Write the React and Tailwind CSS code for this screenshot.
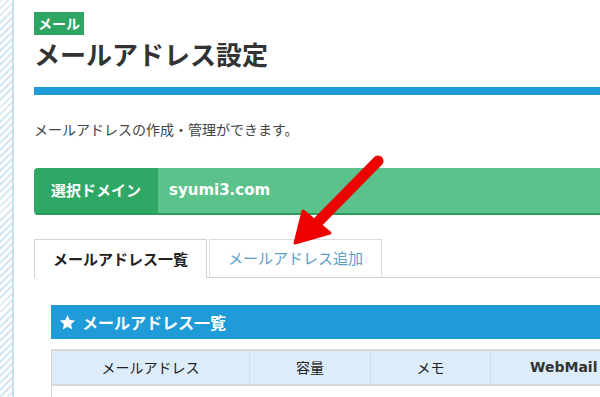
export default function App() {
  const font = { fontFamily: '"Meiryo", "Noto Sans CJK JP", "Noto Sans", sans-serif' };
  const latin = { fontFamily: '"DejaVu Sans", "Noto Sans CJK JP", sans-serif' };
  return (
    <div className="relative flex w-[600px] h-[397px] overflow-hidden bg-white" style={font}>
      <div className="w-[12px] shrink-0 bg-[repeating-linear-gradient(135deg,#d3e8f3_0px,#d3e8f3_2px,#ffffff_2px,#ffffff_5px)]" />
      <div className="w-[2px] shrink-0 bg-[#c7e0ee]" />
      <div className="flex-1 pl-[20px] pt-[10px]">
        <span className="inline-block bg-[#2ea563] text-white text-[14px] font-bold leading-[23px] px-[4px]">メール</span>
        <h1 className="mt-[2px] text-[26px] font-bold text-[#333] leading-[34px]">メールアドレス設定</h1>
        <div className="mt-[16px] h-[8px] bg-[#1f9bd7]" />
        <p className="mt-[26px] text-[14px] text-[#444] leading-[16px]">メールアドレスの作成・管理ができます。</p>

        <div className="mt-[31px] flex h-[47px] border-b-2 border-[#2b9a5b] rounded-l-[4px] overflow-hidden">
          <div className="w-[124px] bg-[#2ea864] flex items-center pl-[17px] text-white text-[15px] font-bold">選択ドメイン</div>
          <div className="flex-1 bg-[#5cc28b] flex items-center pl-[11px] text-white text-[15px] font-bold" style={latin}>syumi3.com</div>
        </div>

        <div className="mt-[24px] flex items-end border-b border-[#cfcfcf]">
          <div className="w-[173px] h-[39px] border border-b-0 border-[#d4d4d4] bg-white flex items-center justify-center text-[15px] font-bold text-[#222] -mb-px">メールアドレス一覧</div>
          <div className="ml-[2px] w-[173px] h-[38px] border border-b-0 border-[#dcdcdc] bg-white flex items-center justify-center text-[15px] text-[#5e9ec6]">メールアドレス追加</div>
        </div>

        <div className="ml-[17px] mt-[27px]">
          <div className="h-[34px] bg-[#1f9bd7] flex items-center pl-[8px] gap-[6px] text-white text-[16px] font-bold">
            <svg width="17" height="17" viewBox="0 0 24 24" fill="#fff">
              <path d="M12 1.5l3.1 7.1 7.7.7-5.8 5.1 1.7 7.6L12 18l-6.7 4 1.7-7.6-5.8-5.1 7.7-.7z" />
            </svg>
            <span>メールアドレス一覧</span>
          </div>
          <div className="mt-[10px] flex h-[37px] border-t-2 border-b-2 border-[#d8d8d8] bg-[#dcedf9] text-[14px] text-[#222]">
            <div className="w-[198px] flex items-center justify-center border-l border-[#d2d2d2]">メールアドレス</div>
            <div className="w-[121px] flex items-center justify-center border-l border-[#d0dde8]">容量</div>
            <div className="w-[120px] flex items-center justify-center border-l border-[#d0dde8]">メモ</div>
            <div className="flex-1 flex items-center justify-start pl-[39px] border-l border-[#d0dde8] font-bold text-[#333]" style={latin}>WebMail</div>
          </div>
          <div className="h-[20px] border-l border-[#d2d2d2]" />
        </div>
      </div>

      <svg className="absolute left-0 top-0 pointer-events-none" width="600" height="397">
        <line x1="378" y1="161" x2="316" y2="224" stroke="#ee0000" strokeWidth="11" strokeLinecap="round" />
        <polygon points="295,243 303,211 330,233" fill="#ee0000" stroke="#ee0000" strokeWidth="3" strokeLinejoin="round" />
      </svg>
    </div>
  );
}
